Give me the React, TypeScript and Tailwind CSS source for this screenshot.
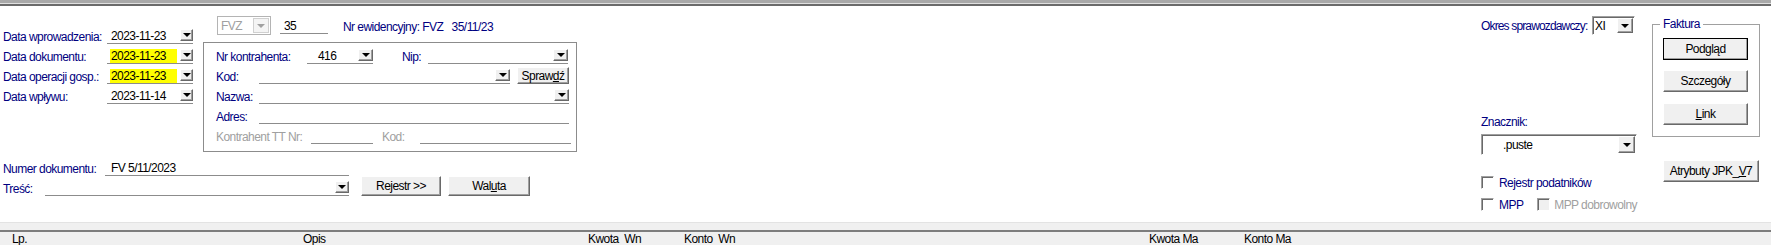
import React from "react";

const navy = "text-[#000080]";
const raised =
  "bg-[#f0f0f0] border border-t-white border-l-white border-r-[#696969] border-b-[#696969] shadow-[inset_-1px_-1px_0_#a0a0a0]";
const sunken =
  "border border-t-[#a0a0a0] border-l-[#a0a0a0] border-r-white border-b-white shadow-[inset_1px_1px_0_#696969]";

const Arrow = ({ disabled = false }: { disabled?: boolean }) => (
  <span
    className={`block h-0 w-0 border-x-[4px] border-t-[4px] border-x-transparent ${
      disabled ? "border-t-[#a0a0a0]" : "border-t-black"
    }`}
  />
);

const DropBtn = ({ className = "h-[12px] w-[14px]" }: { className?: string }) => (
  <span className={`flex shrink-0 items-center justify-center ${raised} ${className}`}>
    <Arrow />
  </span>
);

const UField = ({
  className = "",
  children,
}: {
  className?: string;
  children?: React.ReactNode;
}) => (
  <div className={`flex h-full items-end border-b border-[#8c8c8c] ${className}`}>
    {children}
  </div>
);

const Btn = ({
  className = "",
  children,
}: {
  className?: string;
  children: React.ReactNode;
}) => (
  <button className={`flex items-center justify-center text-black ${raised} ${className}`}>
    {children}
  </button>
);

const DateRow = ({
  label,
  value,
  hl,
}: {
  label: string;
  value: string;
  hl?: boolean;
}) => (
  <div className="flex h-[20px] items-end pl-[3px]">
    <span className={`w-[104px] whitespace-nowrap ${navy}`}>{label}</span>
    <UField className="w-[86px]">
      <span
        className={
          hl ? "ml-[3px] h-[14px] w-[67px] bg-[#ffff00] pl-[1px]" : "ml-[4px] h-[14px]"
        }
      >
        {value}
      </span>
      <DropBtn className="mb-[2px] ml-auto h-[12px] w-[13px]" />
    </UField>
  </div>
);

const Check = ({ disabled = false }: { disabled?: boolean }) => (
  <span
    className={`block h-[13px] w-[13px] shrink-0 ${sunken} ${
      disabled ? "bg-[#f0f0f0]" : "bg-white"
    }`}
  />
);

export default function App() {
  return (
    <div className="h-[245px] w-[1771px] overflow-hidden bg-white font-['Liberation_Sans',Arial,sans-serif] text-[12px] leading-[14px] tracking-[-0.55px] text-black">
      <div className="h-[3px] bg-[#a9a9a9]" />
      <div className="h-[1px] bg-[#e0e0e0]" />
      <div className="h-[2px] bg-[#6b6b6b]" />

      <div className="flex h-[216px]">
        {/* lewa czesc: daty, kontrahent, numer */}
        <div className="flex w-[578px] flex-col">
          <div className="flex">
            <div className="w-[203px] pt-[18px]">
              <DateRow label="Data wprowadzenia:" value="2023-11-23" />
              <DateRow label="Data dokumentu:" value="2023-11-23" hl />
              <DateRow label="Data operacji gosp.:" value="2023-11-23" hl />
              <DateRow label="Data wpływu:" value="2023-11-14" />
            </div>

            <div className="w-[375px] pt-[10px]">
              <div className="flex h-[19px] items-end">
                <div className="ml-[14px] flex h-[19px] w-[54px] items-center border border-[#b4b4b4] bg-white">
                  <span className="pl-[3px] text-[#a0a0a0]">FVZ</span>
                  <span className="ml-auto mr-[1px] flex h-[15px] w-[16px] items-center justify-center border border-[#d0d0d0] bg-[#f4f4f4]">
                    <Arrow disabled />
                  </span>
                </div>
                <UField className="ml-[9px] mb-[1px] w-[48px]">
                  <span className="pl-[4px]">35</span>
                </UField>
                <span className={`mb-[1px] ml-[15px] whitespace-pre ${navy}`}>
                  Nr ewidencyjny: FVZ   35/11/23
                </span>
              </div>

              <div className="mt-[7px] h-[110px] w-[374px] border border-[#8c8c8c] pt-[1px]">
                <div className="flex h-[20px] items-end pl-[12px]">
                  <span className={`w-[91px] ${navy}`}>Nr kontrahenta:</span>
                  <UField className="w-[66px]">
                    <span className="ml-[11px]">416</span>
                    <DropBtn className="mb-[2px] ml-auto h-[12px] w-[15px]" />
                  </UField>
                  <span className={`ml-[29px] w-[26px] ${navy}`}>Nip:</span>
                  <UField className="w-[140px]">
                    <DropBtn className="mb-[2px] ml-auto h-[12px] w-[15px]" />
                  </UField>
                </div>
                <div className="flex h-[20px] items-end pl-[12px]">
                  <span className={`w-[43px] ${navy}`}>Kod:</span>
                  <UField className="w-[251px]">
                    <DropBtn className="mb-[2px] ml-auto h-[12px] w-[15px]" />
                  </UField>
                  <Btn className="ml-[7px] h-[17px] w-[52px]">
                    Spraw<span className="underline">d</span>ź
                  </Btn>
                </div>
                <div className="flex h-[20px] items-end pl-[12px]">
                  <span className={`w-[43px] ${navy}`}>Nazwa:</span>
                  <UField className="w-[310px]">
                    <DropBtn className="mb-[2px] ml-auto h-[12px] w-[15px]" />
                  </UField>
                </div>
                <div className="flex h-[20px] items-end pl-[12px]">
                  <span className={`w-[43px] ${navy}`}>Adres:</span>
                  <UField className="w-[310px]" />
                </div>
                <div className="flex h-[20px] items-end pl-[12px]">
                  <span className="w-[95px] whitespace-nowrap text-[#a0a0a0]">Kontrahent TT Nr:</span>
                  <UField className="w-[62px]" />
                  <span className="ml-[9px] w-[38px] text-[#a0a0a0]">Kod:</span>
                  <UField className="w-[151px]" />
                </div>
              </div>
            </div>
          </div>

          <div className="mt-[4px] flex h-[20px] items-end pl-[3px]">
            <span className={`w-[102px] whitespace-nowrap ${navy}`}>Numer dokumentu:</span>
            <UField className="w-[244px]">
              <span className="ml-[6px]">FV 5/11/2023</span>
            </UField>
          </div>
          <div className="flex h-[20px] items-end pl-[3px]">
            <span className={`w-[42px] ${navy}`}>Treść:</span>
            <UField className="w-[304px]">
              <DropBtn className="mb-[2px] ml-auto h-[12px] w-[14px]" />
            </UField>
            <Btn className="ml-[12px] h-[20px] w-[80px]">Rejestr &gt;&gt;</Btn>
            <Btn className="ml-[7px] h-[20px] w-[82px]">
              Wal<span className="underline">u</span>ta
            </Btn>
          </div>
        </div>

        <div className="flex-1" />

        {/* prawa kolumna */}
        <div className="flex w-[156px] flex-col pt-[10px]">
          <div className="flex h-[19px] items-center">
            <span className={`w-[111px] whitespace-nowrap tracking-[-0.85px] ${navy}`}>
              Okres sprawozdawczy:
            </span>
            <div className={`flex h-[19px] w-[43px] items-center bg-white ${sunken}`}>
              <span className="pl-[2px]">XI</span>
              <DropBtn className="ml-auto mr-[1px] h-[15px] w-[16px]" />
            </div>
          </div>
          <span className={`mt-[80px] ${navy}`}>Znacznik:</span>
          <div className={`mt-[5px] flex h-[21px] w-[156px] items-center bg-white ${sunken}`}>
            <span className="pl-[21px]">.puste</span>
            <DropBtn className="ml-auto mr-[1px] h-[17px] w-[17px]" />
          </div>
          <div className="mt-[21px] flex h-[13px] items-center">
            <Check />
            <span className={`ml-[5px] whitespace-nowrap ${navy}`}>Rejestr podatników</span>
          </div>
          <div className="mt-[9px] flex h-[13px] items-center">
            <div className="flex w-[61px] items-center">
              <Check />
              <span className={`ml-[5px] ${navy}`}>MPP</span>
            </div>
            <Check disabled />
            <span className="ml-[4px] whitespace-nowrap text-[#a0a0a0]">MPP dobrowolny</span>
          </div>
        </div>

        <div className="ml-[15px] mr-[11px] w-[108px] pt-[11px]">
          <fieldset className="h-[120px] w-[108px] border border-[#a0a0a0]">
            <legend className={`ml-[7px] px-[3px] ${navy}`}>Faktura</legend>
            <Btn className="ml-[10px] mt-[7px] h-[22px] w-[85px] !border-black shadow-[inset_-1px_-1px_0_#696969,inset_1px_1px_0_#ffffff]">
              Pod<span className="underline">g</span>ląd
            </Btn>
            <Btn className="ml-[10px] mt-[10px] h-[22px] w-[85px]">
              Szcze<span className="underline">g</span>óły
            </Btn>
            <Btn className="ml-[10px] mt-[11px] h-[22px] w-[85px]">
              <span className="underline">L</span>ink
            </Btn>
          </fieldset>
          <Btn className="ml-[11px] mt-[23px] h-[22px] w-[96px]">
            Atrybuty JPK_<span className="underline">V</span>7
          </Btn>
        </div>
      </div>

      <div className="h-[1px] bg-[#e3e3e3]" />
      <div className="h-[7px] bg-[#f0f0f0]" />
      <div className="h-[2px] bg-[#7d7d7d]" />
      <div className="flex h-[13px] bg-[#f0f0f0] pl-[12px] pt-[1px] leading-[12px] whitespace-pre">
        <span className="w-[291px]">Lp.</span>
        <span className="w-[285px]">Opis</span>
        <span className="w-[96px]">Kwota  Wn</span>
        <span className="w-[465px]">Konto  Wn</span>
        <span className="w-[95px]">Kwota Ma</span>
        <span>Konto Ma</span>
      </div>
    </div>
  );
}
